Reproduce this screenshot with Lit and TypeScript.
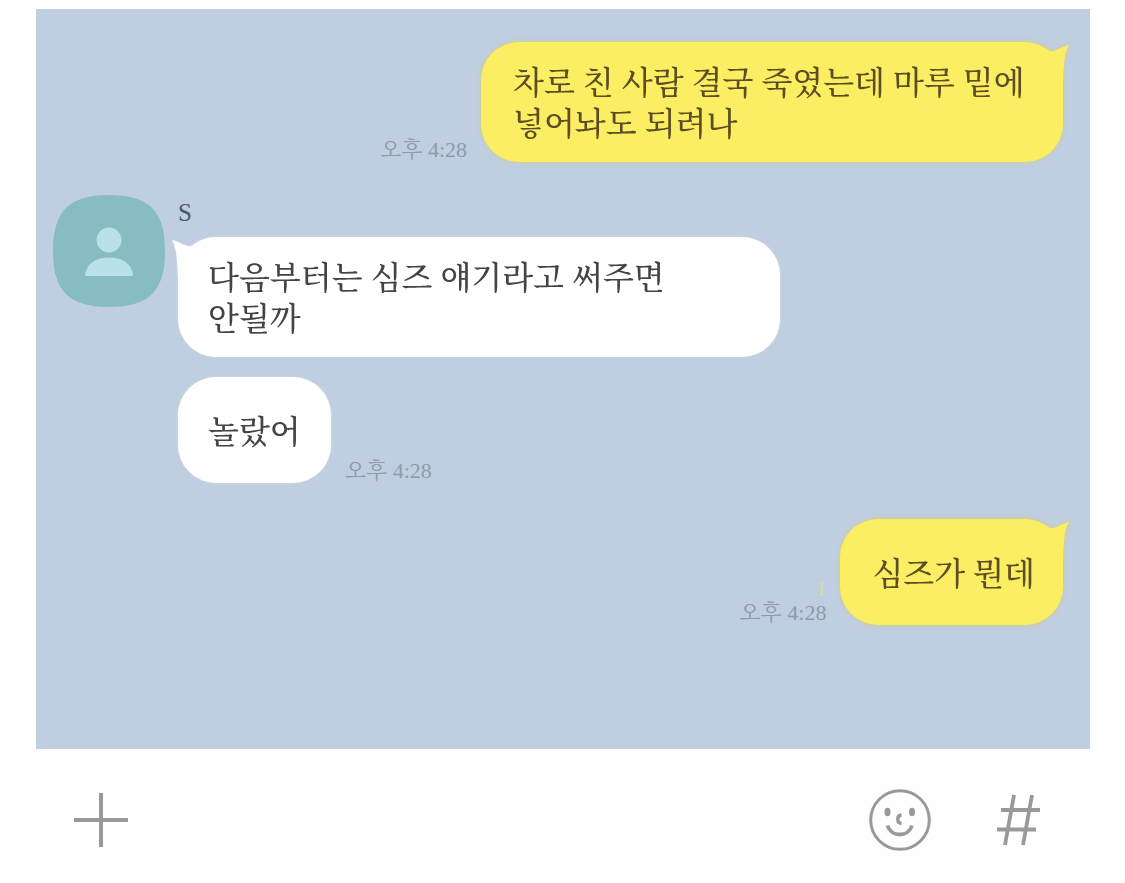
import { LitElement, html, svg, css, nothing } from "lit";
import { customElement, property } from "lit/decorators.js";

type Side = "sent" | "received";

@customElement("chat-bubble")
class ChatBubble extends LitElement {
  @property() side: Side = "received";
  @property() time = "";
  @property() unread = "";
  @property({ type: Boolean }) tail = false;

  static styles = css`
    :host {
      display: block;
    }
    .row {
      display: flex;
      align-items: flex-end;
      gap: 14px;
    }
    .row.sent {
      flex-direction: row-reverse;
    }
    .bubble {
      position: relative;
      box-sizing: border-box;
      display: flex;
      align-items: center;
      min-height: 106px;
      padding: 21px 30px 17px;
      border-radius: 38px;
      font-size: 32px;
      font-weight: 500;
      line-height: 41px;
      word-break: keep-all;
    }
    .text {
      margin: 0;
    }
    .received .bubble {
      max-width: 602px;
      background: #fff;
      color: #444447;
      filter: drop-shadow(0 0 1px rgba(225, 228, 225, 0.9));
    }
    .sent .bubble {
      max-width: 582px;
      padding-left: 32px;
      padding-right: 28px;
      background: #fbee62;
      color: #5c4e22;
      filter: drop-shadow(0 0 2px rgba(222, 208, 96, 0.9));
    }
    .tail {
      position: absolute;
      top: 0;
      width: 48px;
      height: 44px;
    }
    .sent .tail {
      right: -8px;
      fill: #fbee62;
    }
    .received .tail {
      left: -8px;
      fill: #fff;
      transform: scaleX(-1);
    }
    .meta {
      display: flex;
      flex-direction: column;
      flex: none;
      font-size: 22px;
      line-height: 24px;
      color: #8f9aab;
      white-space: nowrap;
    }
    .sent .meta {
      align-items: flex-end;
    }
    .unread {
      color: #dcdc9c;
    }
  `;

  render() {
    return html`<div class="row ${this.side}">
      <div class="bubble">
        ${this.tail
          ? html`<svg class="tail" viewBox="0 0 48 44" aria-hidden="true">
              <path d="M27 9C32 10 38 5 46 3C42 9 41 18 40 40L18 40L16 14Z" />
            </svg>`
          : nothing}
        <p class="text"><slot></slot></p>
      </div>
      ${this.time
        ? html`<div class="meta">
            ${this.unread ? html`<span class="unread">${this.unread}</span>` : nothing}
            <time>${this.time}</time>
          </div>`
        : nothing}
    </div>`;
  }
}

const icons = {
  plus: svg`<path d="M27 0V54M0 27H54" stroke-width="4" />`,
  smile: svg`<circle cx="31" cy="31" r="29.3" stroke-width="3" />
    <ellipse cx="18.5" cy="23" rx="3" ry="4.2" fill="currentColor" stroke="none" />
    <ellipse cx="43" cy="23" rx="3" ry="4.2" fill="currentColor" stroke="none" />
    <path d="M32.5 26C27.5 26.500 27.500 34 32.500 34.500" stroke-width="3.400" />
    <path d="M18.500 36.500C22 48.500 39.500 48.500 43 36.500" stroke-width="3.800" />`,
  hash: svg`<path d="M17 1L8 51M35 1L26 51M4 16H43M0 35.500H39" stroke-width="3.800" />`,
};

@customElement("app-root")
class AppRoot extends LitElement {
  static styles = css`
    :host {
      display: flex;
      flex-direction: column;
      min-height: 100vh;
      box-sizing: border-box;
      padding-top: 9px;
      background: #fefefe;
      font-family: "Liberation Serif", "Noto Serif CJK KR", "Noto Sans CJK KR", serif;
    }
    .chat {
      flex: 1;
      display: flex;
      flex-direction: column;
      gap: 33px;
      margin: 0 35px 0 36px;
      padding: 33px 27px 33px 17px;
      background: #bfcee0;
    }
    .group {
      display: flex;
      gap: 13px;
      margin-bottom: 3px;
    }
    .avatar {
      flex: none;
      width: 112px;
      height: 112px;
    }
    .thread {
      flex: 1;
      min-width: 0;
      display: flex;
      flex-direction: column;
      gap: 20px;
    }
    .name {
      margin: 0 0 6px;
      font-size: 25px;
      line-height: 36px;
      font-weight: 400;
      color: #4a586e;
    }
    .toolbar {
      display: flex;
      align-items: center;
      gap: 66px;
      height: 134px;
      box-sizing: border-box;
      padding: 8px 85px 0 74px;
    }
    .tool {
      display: flex;
      padding: 0;
      border: 0;
      background: none;
      color: #98999b;
      cursor: pointer;
    }
    .tool svg {
      fill: none;
      stroke: currentColor;
    }
    .add {
      margin-right: auto;
    }
  `;

  render() {
    return html`
      <main class="chat">
        <chat-bubble side="sent" time="오후 4:28" tail>차로 친 사람 결국 죽였는데 마루 밑에 넣어놔도 되려나</chat-bubble>
        <section class="group">
          <svg class="avatar" viewBox="0 0 112 112" aria-hidden="true">
            <path
              d="M56 0C96 0 112 16 112 56C112 96 96 112 56 112C16 112 0 96 0 56C0 16 16 0 56 0Z"
              fill="#87bcc2"
            />
            <circle cx="56" cy="45" r="12.500" fill="#b9e2e7" />
            <path d="M32 81C33 69 42 62.500 56 62.500C70 62.500 79 69 80 81Z" fill="#b9e2e7" />
          </svg>
          <div class="thread">
            <div>
              <h2 class="name">S</h2>
              <chat-bubble side="received" tail>다음부터는 심즈 얘기라고 써주면 안될까</chat-bubble>
            </div>
            <chat-bubble side="received" time="오후 4:28">놀랐어</chat-bubble>
          </div>
        </section>
        <chat-bubble side="sent" time="오후 4:28" unread="1" tail>심즈가 뭔데</chat-bubble>
      </main>
      <footer class="toolbar">
        <button class="tool add" aria-label="추가">
          <svg width="54" height="54" viewBox="0 0 54 54">${icons.plus}</svg>
        </button>
        <button class="tool" aria-label="이모티콘">
          <svg width="62" height="62" viewBox="0 0 62 62">${icons.smile}</svg>
        </button>
        <button class="tool" aria-label="해시태그">
          <svg width="43" height="52" viewBox="0 0 43 52">${icons.hash}</svg>
        </button>
      </footer>
    `;
  }
}
